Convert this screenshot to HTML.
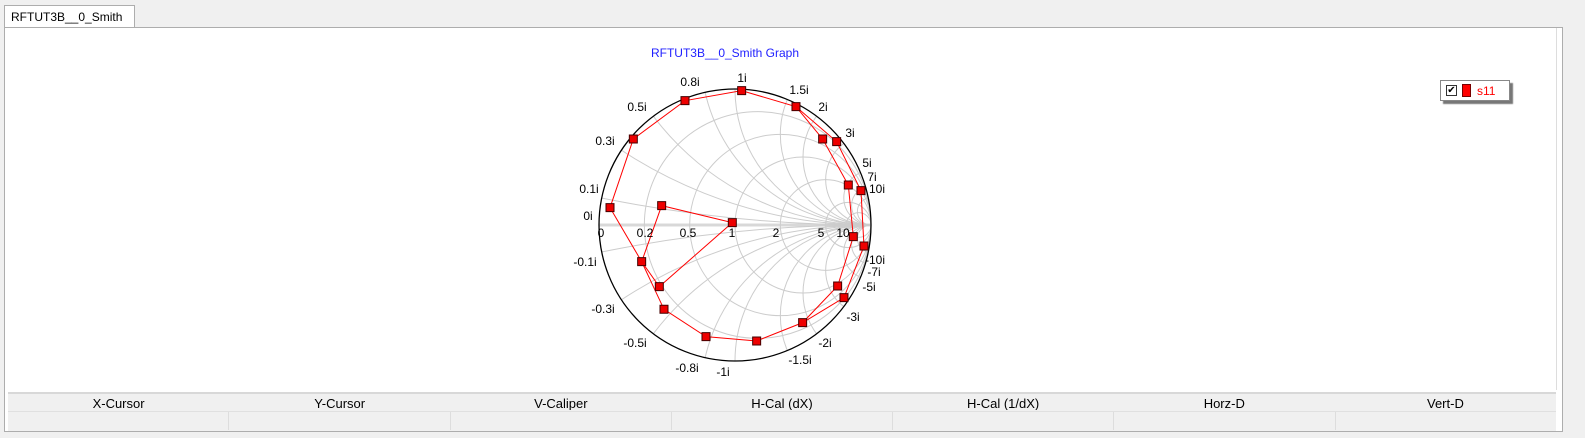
<!DOCTYPE html>
<html><head><meta charset="utf-8"><style>
body{margin:0;width:1585px;height:438px;background:#f0f0f0;font-family:"Liberation Sans",Arial,sans-serif;position:relative;overflow:hidden}
.abs{position:absolute}
.tab{left:4px;top:5px;width:131px;height:22px;background:#fff;border:1px solid #adadad;border-bottom:none;font-size:12px;line-height:22px;padding-left:6px;box-sizing:border-box}
.panel{left:4px;top:27px;width:1559px;height:405px;background:#fff;border:1px solid #adadad;box-sizing:border-box}
.tbl{left:8px;top:392px;width:1548px;height:37px;background:#f0f0f0;border-top:2px solid #d8d8d8}
.hdr{display:flex;height:16px;font-size:13px;line-height:20px;color:#000}
.hdr div{flex:1;text-align:center;overflow:hidden}
.row{display:flex;height:18px;border-top:1px solid #e0e0e0;margin-top:1px}
.row div{flex:1;border-right:1px solid #ddd}
.legend{left:1440px;top:80px;width:68px;height:19px;background:#fff;border:1px solid #888;box-shadow:3px 3px 1px #777;font-size:12px}
</style></head><body>
<div class="abs panel"></div>
<div class="abs tab">RFTUT3B__0_Smith</div>
<div class="abs" style="left:1556px;top:28px;width:1px;height:362px;background:#ddd"></div>
<div class="abs tbl">
<div class="hdr"><div>X-Cursor</div><div>Y-Cursor</div><div>V-Caliper</div><div>H-Cal (dX)</div><div>H-Cal (1/dX)</div><div>Horz-D</div><div>Vert-D</div></div>
<div class="row"><div></div><div></div><div></div><div></div><div></div><div></div><div style="border:none"></div></div>
</div>
<div class="abs" style="left:0;width:1450px;text-align:center;font-size:12px;color:#1f1fff;top:46px">RFTUT3B__0_Smith Graph</div>
<div class="abs legend">
<div class="abs" style="left:5px;top:4px;width:9px;height:9px;border:1px solid #333;font-size:10px;line-height:9px;text-align:center">✔</div>
<div class="abs" style="left:21px;top:3px;width:7px;height:11px;background:#f00;border:1px solid #700"></div>
<div class="abs" style="left:36px;top:3px;color:#f00">s11</div>
</div>
<svg class="abs" style="left:0;top:0" width="1585" height="438">
<defs><clipPath id="uc"><circle cx="0" cy="0" r="1"/></clipPath></defs>
<g transform="translate(735,225) scale(136)">
<g clip-path="url(#uc)" fill="none" stroke="#ccc" stroke-width="1" id="grid">
<line x1="-1" y1="0" x2="1" y2="0" stroke="#d8d8d8" stroke-width="3" vector-effect="non-scaling-stroke"/>
</g>
<circle cx="0" cy="0" r="1" fill="none" stroke="#000" stroke-width="1.3" vector-effect="non-scaling-stroke"/>
</g>
<g transform="translate(580,60) scale(0.3333)" fill="none" stroke="#f00">
<polyline vector-effect="non-scaling-stroke" points="457,488 245,437 185,605 238,680 457,488"/>
<polyline vector-effect="non-scaling-stroke" points="90,443 160,237 315,122 485,92 648,140 770,245 843,392 852,558 792,713 668,788 530,843 378,830 252,748 185,605 90,443"/>
<polyline vector-effect="non-scaling-stroke" points="648,140 728,237 805,375 820,530 773,678 668,788"/>
<g id="pts" fill="#e00" stroke="#400"></g>
</g>
<g font-size="12" fill="#000" font-family="Liberation Sans,Arial,sans-serif" text-anchor="middle">
<text x="742" y="82">1i</text>
<text x="690" y="86">0.8i</text>
<text x="637" y="111">0.5i</text>
<text x="605" y="145">0.3i</text>
<text x="589" y="193">0.1i</text>
<text x="588" y="220">0i</text>
<text x="601" y="237">0</text>
<text x="645" y="237">0.2</text>
<text x="688" y="237">0.5</text>
<text x="732" y="237">1</text>
<text x="776" y="237">2</text>
<text x="821" y="237">5</text>
<text x="843" y="237">10</text>
<text x="799" y="94">1.5i</text>
<text x="823" y="111">2i</text>
<text x="850" y="137">3i</text>
<text x="867" y="167">5i</text>
<text x="872" y="181">7i</text>
<text x="877" y="193">10i</text>
<text x="875" y="264">-10i</text>
<text x="874" y="276">-7i</text>
<text x="869" y="291">-5i</text>
<text x="853" y="321">-3i</text>
<text x="825" y="347">-2i</text>
<text x="800" y="364">-1.5i</text>
<text x="723" y="376">-1i</text>
<text x="687" y="372">-0.8i</text>
<text x="635" y="347">-0.5i</text>
<text x="603" y="313">-0.3i</text>
<text x="585" y="266">-0.1i</text>
</g>
</svg>
<script>
var ns="http://www.w3.org/2000/svg",g=document.getElementById("grid");
function c(cx,cy,r){var e=document.createElementNS(ns,"circle");e.setAttribute("cx",cx);e.setAttribute("cy",cy);e.setAttribute("r",r);e.setAttribute("vector-effect","non-scaling-stroke");g.appendChild(e);}
[0.2,0.5,1,2,5,10].forEach(function(r){c(r/(1+r),0,1/(1+r));});
[0.1,0.3,0.5,0.8,1,1.5,2,3,5,7,10].forEach(function(x){c(1,-1/x,1/x);c(1,1/x,1/x);});
var p=document.getElementById("pts");
[[457,488],[245,437],[185,605],[238,680],[90,443],[160,237],[315,122],[485,92],[648,140],[770,245],[843,392],[852,558],[792,713],[668,788],[530,843],[378,830],[252,748],[728,237],[805,375],[820,530],[773,678]].forEach(function(q){var e=document.createElementNS(ns,"rect");e.setAttribute("x",q[0]-12);e.setAttribute("y",q[1]-12);e.setAttribute("width",24);e.setAttribute("height",24);e.setAttribute("vector-effect","non-scaling-stroke");p.appendChild(e);});
</script>
</body></html>
